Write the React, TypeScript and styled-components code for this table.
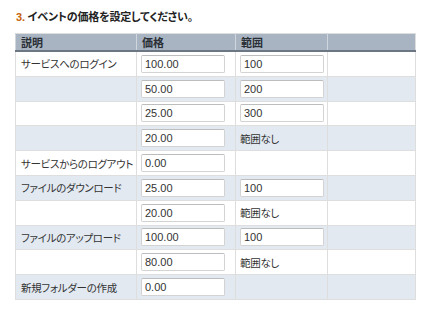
import React from "react"
import styled, { createGlobalStyle } from "styled-components"

const GlobalStyle = createGlobalStyle`
  html, body {
    margin: 0;
    padding: 0;
    background: #ffffff;
  }
  body {
    font-family: "Liberation Sans", "Noto Sans CJK JP", sans-serif;
    font-size: 11px;
    color: #333333;
  }
`

const Section = styled.section`
  padding: 11px 0 0 15px;
`

const Title = styled.h3`
  margin: 0 0 9px 1px;
  font-size: 11px;
  line-height: 13px;
  font-weight: bold;
  color: #222222;
  font-feature-settings: "palt";
  letter-spacing: -0.2px;

  .num {
    color: #c8620c;
  }
`

const PriceTable = styled.table`
  width: 400px;
  border-collapse: collapse;
  table-layout: fixed;
  border: 1px solid #dedede;

  th {
    height: 15px;
    padding: 0 0 0 5px;
    background: #a8b4c2;
    border-left: 1px solid #d0d6dd;
    border-bottom: 2px solid #6d7783;
    text-align: left;
    font-size: 11px;
    font-weight: bold;
    color: #2a2f36;
  }

  td {
    height: 23.8px;
    padding: 0 0 0 4px;
    border-left: 1px solid #dedede;
    border-bottom: 1px solid #dedede;
    vertical-align: middle;
    white-space: nowrap;
    font-size: 10.5px;
    font-feature-settings: "palt";
    letter-spacing: -0.3px;
  }

  td.label {
    padding-left: 5px;
  }
`

const Col = styled.col<{ $w: number }>`
  width: ${(p) => p.$w}px;
`

const Row = styled.tr<{ $shaded?: boolean }>`
  background: ${(p) => (p.$shaded ? "#e2e9f1" : "#ffffff")};
`

const ValueInput = styled.input`
  box-sizing: border-box;
  display: block;
  width: 84px;
  height: 18px;
  margin: 0;
  padding: 0 3px;
  border: 1px solid #d3d3d3;
  border-top-color: #bdbdbd;
  border-radius: 2px;
  background: #ffffff;
  font-family: "Liberation Sans", Arial, sans-serif;
  font-size: 11px;
  letter-spacing: 0;
  color: #333333;
  outline: none;
`

type PriceRow = {
  label?: string
  price: string
  range?: string
  noRange?: boolean
}

const rows: PriceRow[] = [
  { label: "サービスへのログイン", price: "100.00", range: "100" },
  { price: "50.00", range: "200" },
  { price: "25.00", range: "300" },
  { price: "20.00", noRange: true },
  { label: "サービスからのログアウト", price: "0.00" },
  { label: "ファイルのダウンロード", price: "25.00", range: "100" },
  { price: "20.00", noRange: true },
  { label: "ファイルのアップロード", price: "100.00", range: "100" },
  { price: "80.00", noRange: true },
  { label: "新規フォルダーの作成", price: "0.00" },
]

const colWidths = [121, 99, 92, 88]

export default function App() {
  return (
    <>
      <GlobalStyle />
      <Section>
        <Title>
          <span className="num">3.</span> イベントの価格を設定してください。
        </Title>
        <PriceTable>
          <colgroup>
            {colWidths.map((w, i) => (
              <Col key={i} $w={w} />
            ))}
          </colgroup>
          <thead>
            <tr>
              <th>説明</th>
              <th>価格</th>
              <th>範囲</th>
              <th></th>
            </tr>
          </thead>
          <tbody>
            {rows.map((r, i) => (
              <Row key={i} $shaded={i % 2 === 1}>
                <td className="label">{r.label ?? ""}</td>
                <td>
                  <ValueInput defaultValue={r.price} />
                </td>
                <td>
                  {r.range ? (
                    <ValueInput defaultValue={r.range} />
                  ) : r.noRange ? (
                    "範囲なし"
                  ) : null}
                </td>
                <td></td>
              </Row>
            ))}
          </tbody>
        </PriceTable>
      </Section>
    </>
  )
}
